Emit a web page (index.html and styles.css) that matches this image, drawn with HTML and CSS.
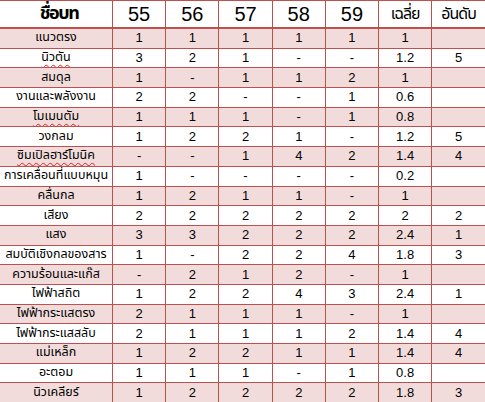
FILE: index.html
```html
<!DOCTYPE html>
<html lang="th">
<head>
<meta charset="utf-8">
<link rel="stylesheet" href="styles.css">
</head>
<body>
<table class="grid">
  <colgroup>
    <col class="c-name"><col class="c-num"><col class="c-num"><col class="c-num"><col class="c-num"><col class="c-num"><col class="c-num"><col class="c-num">
  </colgroup>
  <thead>
    <tr class="head">
      <th class="h-title">ชื่อบท</th><th class="h-year">55</th><th class="h-year">56</th><th class="h-year">57</th><th class="h-year">58</th><th class="h-year">59</th><th class="h-th">เฉลี่ย</th><th class="h-th">อันดับ</th>
    </tr>
  </thead>
  <tbody>
    <tr class="pink"><td>แนวตรง</td><td>1</td><td>1</td><td>1</td><td>1</td><td>1</td><td>1</td><td></td></tr>
    <tr><td><span class="spell">นิวตัน</span></td><td>3</td><td>2</td><td>1</td><td>-</td><td>-</td><td>1.2</td><td>5</td></tr>
    <tr class="pink"><td>สมดุล</td><td>1</td><td>-</td><td>1</td><td>1</td><td>2</td><td>1</td><td></td></tr>
    <tr><td>งานและพลังงาน</td><td>2</td><td>2</td><td>-</td><td>-</td><td>1</td><td>0.6</td><td></td></tr>
    <tr class="pink"><td><span class="spell">โมเมนตัม</span></td><td>1</td><td>1</td><td>1</td><td>-</td><td>1</td><td>0.8</td><td></td></tr>
    <tr><td>วงกลม</td><td>1</td><td>2</td><td>2</td><td>1</td><td>-</td><td>1.2</td><td>5</td></tr>
    <tr class="pink"><td><span class="spell">ซิมเปิลฮาร์โมนิค</span></td><td>-</td><td>-</td><td>1</td><td>4</td><td>2</td><td>1.4</td><td>4</td></tr>
    <tr><td>การเคลื่อนที่แบบหมุน</td><td>1</td><td>-</td><td>-</td><td>-</td><td>-</td><td>0.2</td><td></td></tr>
    <tr class="pink"><td>คลื่นกล</td><td>1</td><td>2</td><td>1</td><td>1</td><td>-</td><td>1</td><td></td></tr>
    <tr><td>เสียง</td><td>2</td><td>2</td><td>2</td><td>2</td><td>2</td><td>2</td><td>2</td></tr>
    <tr class="pink"><td>แสง</td><td>3</td><td>3</td><td>2</td><td>2</td><td>2</td><td>2.4</td><td>1</td></tr>
    <tr><td>สมบัติเชิงกลของสาร</td><td>1</td><td>-</td><td>2</td><td>2</td><td>4</td><td>1.8</td><td>3</td></tr>
    <tr class="pink"><td>ความร้อนและแก๊ส</td><td>-</td><td>2</td><td>1</td><td>2</td><td>-</td><td>1</td><td></td></tr>
    <tr><td>ไฟฟ้าสถิต</td><td>1</td><td>2</td><td>2</td><td>4</td><td>3</td><td>2.4</td><td>1</td></tr>
    <tr class="pink"><td>ไฟฟ้ากระแสตรง</td><td>2</td><td>1</td><td>1</td><td>1</td><td>-</td><td>1</td><td></td></tr>
    <tr><td>ไฟฟ้ากระแสสลับ</td><td>2</td><td>1</td><td>1</td><td>1</td><td>2</td><td>1.4</td><td>4</td></tr>
    <tr class="pink"><td>แม่เหล็ก</td><td>1</td><td>2</td><td>2</td><td>1</td><td>1</td><td>1.4</td><td>4</td></tr>
    <tr><td>อะตอม</td><td>1</td><td>1</td><td>1</td><td>-</td><td>1</td><td>0.8</td><td></td></tr>
    <tr class="pink"><td>นิวเคลียร์</td><td>1</td><td>2</td><td>2</td><td>2</td><td>2</td><td>1.8</td><td>3</td></tr>
  </tbody>
</table>
</body>
</html>
```
FILE: styles.css
```css
html, body {
  margin: 0;
  padding: 0;
  background: #ffffff;
}
body {
  width: 485px;
  height: 402px;
  overflow: hidden;
  font-family: "Noto Sans Thai", "Liberation Sans", "DejaVu Sans", sans-serif;
  color: #000000;
}
.grid {
  border-collapse: collapse;
  table-layout: fixed;
  width: 485px;
  margin: 0;
}
.c-name { width: 112.5px; }
.c-num { width: 53.2px; }
.grid th,
.grid td {
  border: 1px solid #c0504d;
  text-align: center;
  padding: 0;
  white-space: nowrap;
  overflow: hidden;
}
.grid tr > :first-child { border-left: none; }
.grid tr > :last-child { border-right: none; }
.head th {
  height: 26px;
  border-bottom: 2px solid #c0504d;
  font-weight: normal;
  line-height: 26px;
}
.grid .head .h-title {
  font-size: 18px;
  font-weight: bold;
  letter-spacing: -1.5px;
  padding-left: 6px;
}
.grid .head .h-year {
  font-family: "Liberation Sans", sans-serif;
  font-size: 20px;
}
.grid .head .h-th {
  font-size: 16px;
  letter-spacing: -1px;
}
.grid td {
  height: 18.7px;
  font-size: 12.5px;
  line-height: 18px;
}
.grid td:not(:first-child) {
  font-family: "Liberation Sans", sans-serif;
  font-size: 13px;
}
.pink td { background: #f2dcdb; }
.spell {
  text-decoration: underline wavy #e02020;
  text-decoration-thickness: 1px;
  text-underline-offset: 3px;
}
```
